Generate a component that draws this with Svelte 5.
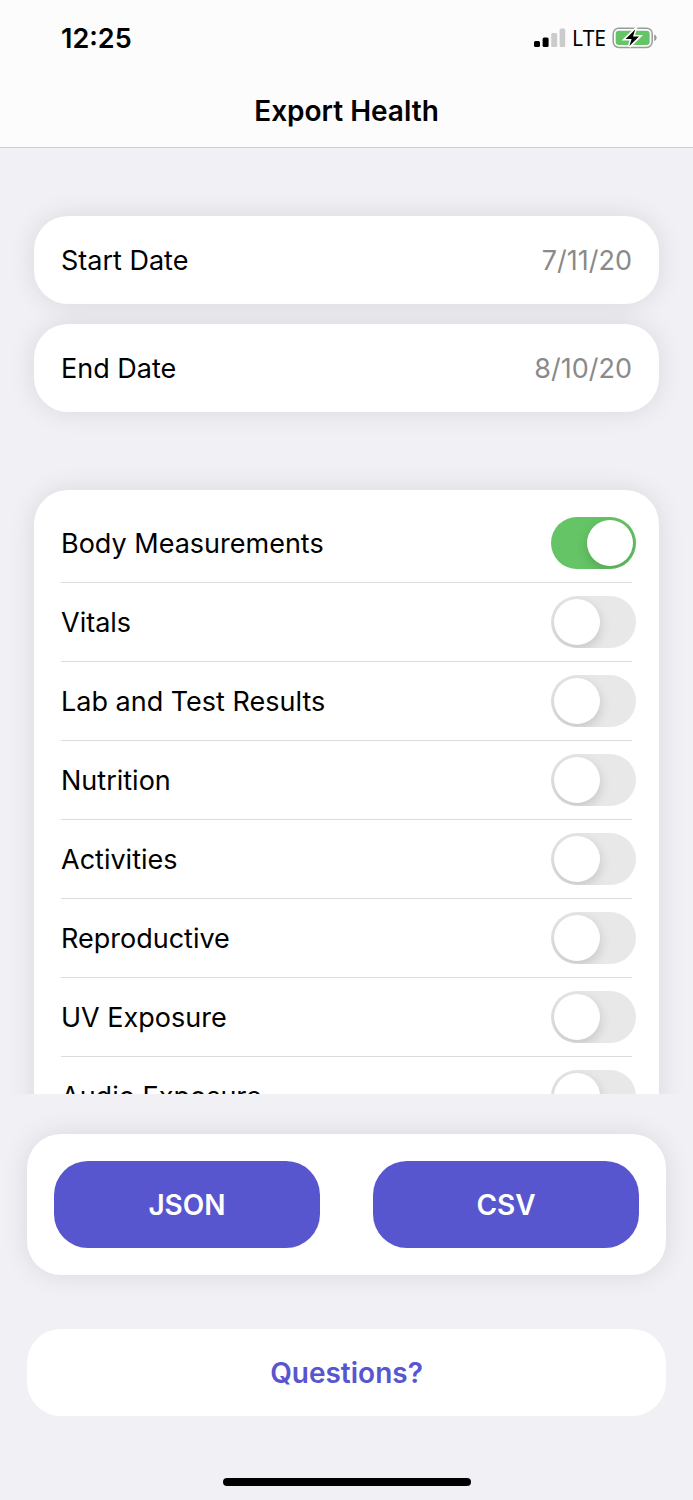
<script lang="ts">
  interface Category {
    id: string;
    label: string;
    enabled: boolean;
  }

  let startDate = $state("7/11/20");
  let endDate = $state("8/10/20");

  let categories = $state<Category[]>([
    { id: "body", label: "Body Measurements", enabled: true },
    { id: "vitals", label: "Vitals", enabled: false },
    { id: "lab", label: "Lab and Test Results", enabled: false },
    { id: "nutrition", label: "Nutrition", enabled: false },
    { id: "activities", label: "Activities", enabled: false },
    { id: "reproductive", label: "Reproductive", enabled: false },
    { id: "uv", label: "UV Exposure", enabled: false },
    { id: "audio", label: "Audio Exposure", enabled: false },
  ]);
</script>

<div class="app">
  <header class="top">
    <div class="status-bar">
      <span class="time">12:25</span>
      <div class="status-icons">
        <svg width="32" height="20" viewBox="0 0 32 20">
          <rect x="0" y="13" width="6" height="6" rx="1.5" fill="#000"/>
          <rect x="8.6" y="9.5" width="6" height="9.5" rx="1.5" fill="#000"/>
          <rect x="17.2" y="5" width="6" height="14" rx="1.5" fill="#cbcbcb"/>
          <rect x="25.6" y="0.5" width="5.6" height="18.5" rx="1.5" fill="#cbcbcb"/>
        </svg>
        <span class="network">LTE</span>
        <svg width="45" height="22" viewBox="0 0 45 22">
          <rect x="1.2" y="1.2" width="39" height="19.2" rx="5.6" fill="none" stroke="#9b9b9d" stroke-width="1.5"/>
          <path d="M42.2 7.4c1.6.6 2.4 1.8 2.4 3.4s-.8 2.8-2.4 3.4z" fill="#9b9b9d"/>
          <rect x="3.7" y="3.7" width="34" height="14.2" rx="3.2" fill="#65c466"/>
          <path d="M23.4 2.2 13.2 12h6.2l-2.2 7.6L27.4 9.4h-6.2z" fill="#fcfcfc" stroke="#fcfcfc" stroke-width="3"/>
          <path d="M23.2 2.6 13.6 11.9h6l-2.2 7.2L27 9.5h-6z" fill="#000"/>
        </svg>
      </div>
    </div>
    <h1>Export Health</h1>
  </header>

  <main class="content">
    <div class="dates">
      <label class="card date-row">
        <span class="label">Start Date</span>
        <input type="text" bind:value={startDate} />
      </label>
      <label class="card date-row">
        <span class="label">End Date</span>
        <input type="text" bind:value={endDate} />
      </label>
    </div>

    <div class="card categories">
      {#each categories as category (category.id)}
        <label class="category">
          <span class="label">{category.label}</span>
          <input type="checkbox" role="switch" class="toggle" bind:checked={category.enabled} />
        </label>
      {/each}
    </div>
  </main>

  <footer class="bottom">
    <div class="card actions">
      <button class="btn primary">JSON</button>
      <button class="btn primary">CSV</button>
    </div>
    <button class="btn questions">Questions?</button>
    <div class="home-indicator"></div>
  </footer>
</div>

<style>
  :global(body) {
    margin: 0;
    background: #f1f0f5;
  }

  .app {
    display: flex;
    flex-direction: column;
    height: 100vh;
    background: #f1f0f5;
    color: #000;
    font-family: Inter, "Liberation Sans", sans-serif;
    font-size: 27px;
    line-height: 36px;
  }

  .top {
    background: #fcfcfc;
    border-bottom: 1px solid #cccccf;
  }

  .status-bar {
    display: flex;
    align-items: center;
    justify-content: space-between;
    height: 76px;
    padding: 0 36px 0 61px;
  }

  .time {
    padding-top: 2px;
    font-weight: 600;
  }

  .status-icons {
    display: flex;
    align-items: center;
    gap: 6px;
  }

  .network {
    font-family: "Noto Sans", sans-serif;
    font-size: 21px;
  }

  h1 {
    margin: 0;
    padding: 17px 0 18px;
    font-size: 28px;
    font-weight: 600;
    text-align: center;
  }

  .content {
    flex: 1;
    min-height: 0;
    overflow-y: auto;
    scrollbar-width: none;
    padding: 68px 34px 40px;
  }

  .card {
    background: #fff;
    border-radius: 34px;
    box-shadow: 0 0 27px rgba(0, 0, 0, 0.1);
  }

  .label {
    flex: 1;
    padding-top: 2px;
  }

  .dates {
    display: flex;
    flex-direction: column;
    gap: 20px;
    margin-bottom: 78px;
  }

  .date-row {
    display: flex;
    align-items: center;
    height: 88px;
    padding: 0 27px;
  }

  .date-row input {
    width: 160px;
    padding: 2px 0 0;
    border: none;
    background: transparent;
    color: #8a8a8a;
    font: inherit;
    text-align: right;
    outline: none;
  }

  .categories {
    padding: 14px 27px;
  }

  .category {
    display: flex;
    align-items: center;
    height: 78px;
    border-bottom: 1px solid #dcdcde;
  }

  .category:last-child {
    border-bottom: none;
  }

  .toggle {
    appearance: none;
    flex-shrink: 0;
    box-sizing: border-box;
    width: 85px;
    height: 52px;
    margin: 0 -4px 0 0;
    padding: 3px;
    border-radius: 26px;
    background: #e8e8e8;
    overflow: hidden;
    cursor: pointer;
    transition: background-color 0.2s;
  }

  .toggle::before {
    content: "";
    display: block;
    width: 46px;
    height: 46px;
    border-radius: 50%;
    background: #fff;
    box-shadow: 0 4px 12px rgba(0, 0, 0, 0.16);
    transition: margin 0.2s;
  }

  .toggle:checked {
    background: #65c466;
  }

  .toggle:checked::before {
    margin-left: auto;
  }

  .bottom {
    padding: 40px 27px 14px;
  }

  .actions {
    display: flex;
    gap: 53px;
    padding: 27px;
    margin-bottom: 54px;
  }

  .btn {
    height: 87px;
    padding: 0;
    border: none;
    border-radius: 34px;
    font: inherit;
    font-size: 28px;
    font-weight: 600;
    cursor: pointer;
  }

  .primary {
    flex: 1;
    background: #5856ce;
    color: #fff;
  }

  .questions {
    display: block;
    width: 100%;
    background: #fff;
    color: #5856ce;
  }

  .home-indicator {
    width: 248px;
    height: 8px;
    margin: 62px auto 0;
    border-radius: 4px;
    background: #000;
  }
</style>
